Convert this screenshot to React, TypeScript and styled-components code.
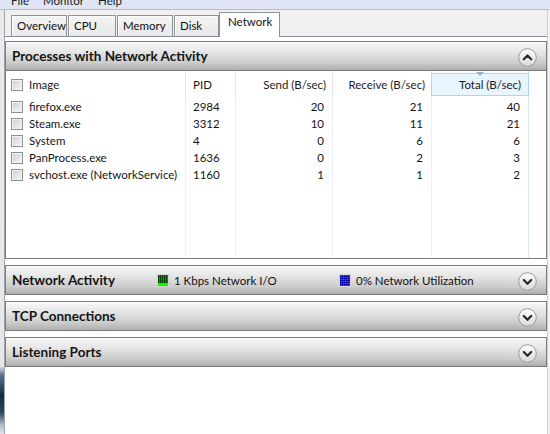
import React from "react";
import styled, { createGlobalStyle, css } from "styled-components";

const GlobalStyle = createGlobalStyle`
  html, body { margin: 0; padding: 0; background: #fff; }
  body { font-family: Lato, "Segoe UI", sans-serif; font-size: 11.5px; color: #000; }
  * { box-sizing: border-box; }
`;

const Window = styled.div`
  width: 550px;
  height: 434px;
  overflow: hidden;
  display: flex;
  flex-direction: column;
  background: #f0f0f0;
`;

const MenuBar = styled.div`
  flex: none;
  height: 10px;
  overflow: hidden;
  display: flex;
  padding-left: 4px;
  background: #dfe5f4;
  border-bottom: 1px solid #b6bccb;
`;

const MenuItem = styled.span`
  padding: 0 7px;
  line-height: 18px;
  margin-top: -8px;
  color: #1a1a1a;
`;

const Body = styled.div`
  flex: 1;
  display: flex;
  min-height: 0;
`;

const LeftFrame = styled.div`
  flex: none;
  width: 4px;
  background: linear-gradient(
    #e9ebee 0%,
    #e4e7ea 84%,
    #5a7592 86%,
    #102a46 91%,
    #2c4866 95%,
    #b8c2ce 98%,
    #dfe3e8 100%
  );
`;

const RightFrame = styled.div`
  flex: none;
  width: 3px;
  background: #f3f3f3;
  border-left: 1px solid #cfd1d4;
`;

const Main = styled.div`
  flex: 1;
  display: flex;
  flex-direction: column;
  border-left: 1px solid #a0a4ab;
  min-width: 0;
`;

const TabStrip = styled.div`
  flex: none;
  height: 27px;
  display: flex;
  align-items: flex-end;
  gap: 1px;
  padding-left: 6px;
  border-bottom: 1px solid #898c95;
`;

const Tab = styled.div<{ $w: number; $active?: boolean }>`
  width: ${(p) => p.$w}px;
  height: 21px;
  padding: 3px 0 0 5px;
  border: 1px solid #8e9399;
  border-bottom: none;
  background: linear-gradient(#f4f4f4, #e8e8e8);
  box-shadow: inset 1px 1px 0 #fcfcfc;
  color: #111;
  white-space: nowrap;
  ${(p) =>
    p.$active &&
    css`
      height: 25px;
      margin-bottom: -1px;
      margin-left: -1px;
      padding: 2px 0 0 8px;
      background: #fff;
      box-shadow: none;
    `}
`;

const TabPage = styled.div`
  flex: 1;
  background: #fff;
  padding-top: 4px;
  display: flex;
  flex-direction: column;
  gap: 6px;
`;

const Section = styled.div`
  display: flex;
  flex-direction: column;
`;

const SectionHeader = styled.div`
  height: 30px;
  display: flex;
  align-items: center;
  padding: 0 9px 0 6px;
  border: 1px solid #7a7a7a;
  background: linear-gradient(#f8f8f8 0%, #e6e6e6 35%, #cbcbcb 75%, #aeaeae 100%);
  box-shadow: inset 0 1px 0 #ffffff;
`;

const Title = styled.div<{ $w?: number }>`
  font-size: 13.5px;
  font-weight: 700;
  color: #151515;
  ${(p) => (p.$w ? `width: ${p.$w}px; flex: none;` : "flex: 1;")}
`;

const Indicator = styled.div<{ $w?: number }>`
  display: flex;
  align-items: center;
  gap: 5px;
  color: #111;
  padding-top: 1px;
  ${(p) => (p.$w ? `width: ${p.$w}px; flex: none;` : "flex: 1;")}
`;

const Swatch = styled.span<{ $kind: "green" | "blue" }>`
  width: 12px;
  height: 13px;
  flex: none;
  border: 1px solid #d4d4d4;
  ${(p) =>
    p.$kind === "green"
      ? css`
          background: linear-gradient(#00ff00, #00ff00) bottom / 100% 3px no-repeat,
            repeating-linear-gradient(90deg, rgba(0, 0, 0, 0.55) 0 1px, transparent 1px 2px),
            repeating-linear-gradient(0deg, rgba(0, 0, 0, 0.55) 0 1px, #008a00 1px 2px);
        `
      : css`
          background: repeating-linear-gradient(90deg, rgba(0, 0, 90, 0.55) 0 1px, transparent 1px 2px),
            repeating-linear-gradient(0deg, rgba(0, 0, 90, 0.55) 0 1px, #0000ff 1px 2px);
        `}
`;

const ToggleButton = styled.div`
  width: 19px;
  height: 19px;
  flex: none;
  margin-top: 2px;
  display: flex;
`;

const TableBox = styled.div`
  height: 188px;
  border: 1px solid #7a7a7a;
  border-top: none;
  display: flex;
  flex-direction: column;
`;

const COLS = "180px 50px 97px 99px 97px 1fr";

const GridRow = styled.div<{ $h?: number; $fill?: boolean }>`
  display: grid;
  grid-template-columns: ${COLS};
  ${(p) => (p.$fill ? "flex: 1;" : `height: ${p.$h}px; flex: none;`)}
`;

const HeadCell = styled.div<{ $sorted?: boolean; $last?: boolean }>`
  position: relative;
  border-right: ${(p) => (p.$last ? "none" : `1px solid ${p.$sorted ? "#c9e3f3" : "#e3e6ea"}`)};
  padding-top: 2px;
  padding-bottom: 2px;
  display: flex;
`;

const HeadLabel = styled.div<{ $right?: boolean; $sorted?: boolean; $pl?: number }>`
  flex: 1;
  display: flex;
  align-items: center;
  gap: 6px;
  justify-content: ${(p) => (p.$right ? "flex-end" : "flex-start")};
  padding: 0 6px 0 ${(p) => p.$pl ?? 6}px;
  color: #1a1a1a;
  white-space: nowrap;
  ${(p) =>
    p.$sorted &&
    css`
      margin-left: -1px;
      margin-right: -1px;
      padding-right: 7px;
      background: #e8f5fc;
      border: 1px solid #a9d8f1;
    `}
`;

const SortArrow = styled.span`
  position: absolute;
  top: 1px;
  left: 50%;
  margin-left: -4px;
  width: 0;
  height: 0;
  border-left: 4px solid transparent;
  border-right: 4px solid transparent;
  border-top: 4px solid #88b9dc;
`;

const Cell = styled.div<{ $right?: boolean; $sorted?: boolean; $last?: boolean; $pl?: number }>`
  display: flex;
  align-items: center;
  gap: 6px;
  justify-content: ${(p) => (p.$right ? "flex-end" : "flex-start")};
  padding: 0 ${(p) => (p.$right ? 8 : 0)}px 0 ${(p) => p.$pl ?? 7}px;
  border-right: ${(p) => (p.$last ? "none" : `1px solid ${p.$sorted ? "#dceaf6" : "#edf0f4"}`)};
  color: #141414;
  white-space: nowrap;
`;

const Check = styled.span`
  width: 12px;
  height: 12px;
  flex: none;
  border: 1px solid #8e8f8f;
  background: linear-gradient(135deg, #cdcece 0%, #eeeeee 80%, #f6f6f6 100%);
  box-shadow: inset 0 0 0 1px #f3f3f3;
`;

const ChevronCircle = ({ up }: { up?: boolean }) => (
  <svg width="19" height="19" viewBox="0 0 19 19">
    <defs>
      <linearGradient id={up ? "cgu" : "cgd"} x1="0" y1="0" x2="0" y2="1">
        <stop offset="0" stopColor="#ffffff" />
        <stop offset="1" stopColor="#d9d9d9" />
      </linearGradient>
    </defs>
    <circle cx="9.5" cy="9.5" r="8.8" fill={`url(#${up ? "cgu" : "cgd"})`} stroke="#9a9a9a" strokeWidth="1" />
    <path
      d={up ? "M5.8 11.2 L9.5 7.5 L13.2 11.2" : "M5.8 8 L9.5 11.7 L13.2 8"}
      fill="none"
      stroke="#2a2a2a"
      strokeWidth="2.3"
      strokeLinecap="round"
      strokeLinejoin="round"
    />
  </svg>
);

const rows = [
  { name: "firefox.exe", pid: "2984", send: "20", recv: "21", total: "40" },
  { name: "Steam.exe", pid: "3312", send: "10", recv: "11", total: "21" },
  { name: "System", pid: "4", send: "0", recv: "6", total: "6" },
  { name: "PanProcess.exe", pid: "1636", send: "0", recv: "2", total: "3" },
  { name: "svchost.exe (NetworkService)", pid: "1160", send: "1", recv: "1", total: "2" },
];

const tabs = [
  { label: "Overview", w: 56 },
  { label: "CPU", w: 48 },
  { label: "Memory", w: 56 },
  { label: "Disk", w: 45 },
  { label: "Network", w: 61, active: true },
];

export default function App() {
  return (
    <>
      <GlobalStyle />
      <Window>
        <MenuBar>
          <MenuItem>File</MenuItem>
          <MenuItem>Monitor</MenuItem>
          <MenuItem>Help</MenuItem>
        </MenuBar>
        <Body>
          <LeftFrame />
          <Main>
            <TabStrip>
              {tabs.map((t) => (
                <Tab key={t.label} $w={t.w} $active={t.active}>
                  {t.label}
                </Tab>
              ))}
            </TabStrip>
            <TabPage>
              <Section>
                <SectionHeader>
                  <Title>Processes with Network Activity</Title>
                  <ToggleButton>
                    <ChevronCircle up />
                  </ToggleButton>
                </SectionHeader>
                <TableBox>
                  <GridRow $h={27}>
                    <HeadCell>
                      <HeadLabel $pl={5}>
                        <Check />
                        Image
                      </HeadLabel>
                    </HeadCell>
                    <HeadCell>
                      <HeadLabel $pl={7}>PID</HeadLabel>
                    </HeadCell>
                    <HeadCell>
                      <HeadLabel $right>Send (B/sec)</HeadLabel>
                    </HeadCell>
                    <HeadCell>
                      <HeadLabel $right>Receive (B/sec)</HeadLabel>
                    </HeadCell>
                    <HeadCell $sorted>
                      <SortArrow />
                      <HeadLabel $right $sorted>
                        Total (B/sec)
                      </HeadLabel>
                    </HeadCell>
                    <HeadCell $last />
                  </GridRow>
                  {rows.map((r) => (
                    <GridRow key={r.name} $h={17}>
                      <Cell $pl={5}>
                        <Check />
                        {r.name}
                      </Cell>
                      <Cell>{r.pid}</Cell>
                      <Cell $right>{r.send}</Cell>
                      <Cell $right>{r.recv}</Cell>
                      <Cell $right $sorted>
                        {r.total}
                      </Cell>
                      <Cell $last />
                    </GridRow>
                  ))}
                  <GridRow $fill>
                    <Cell />
                    <Cell />
                    <Cell />
                    <Cell />
                    <Cell $sorted />
                    <Cell $last />
                  </GridRow>
                </TableBox>
              </Section>
              <Section>
                <SectionHeader>
                  <Title $w={145}>Network Activity</Title>
                  <Indicator $w={182}>
                    <Swatch $kind="green" />
                    1 Kbps Network I/O
                  </Indicator>
                  <Indicator>
                    <Swatch $kind="blue" />
                    0% Network Utilization
                  </Indicator>
                  <ToggleButton>
                    <ChevronCircle />
                  </ToggleButton>
                </SectionHeader>
              </Section>
              <Section>
                <SectionHeader>
                  <Title>TCP Connections</Title>
                  <ToggleButton>
                    <ChevronCircle />
                  </ToggleButton>
                </SectionHeader>
              </Section>
              <Section>
                <SectionHeader>
                  <Title>Listening Ports</Title>
                  <ToggleButton>
                    <ChevronCircle />
                  </ToggleButton>
                </SectionHeader>
              </Section>
            </TabPage>
          </Main>
          <RightFrame />
        </Body>
      </Window>
    </>
  );
}
